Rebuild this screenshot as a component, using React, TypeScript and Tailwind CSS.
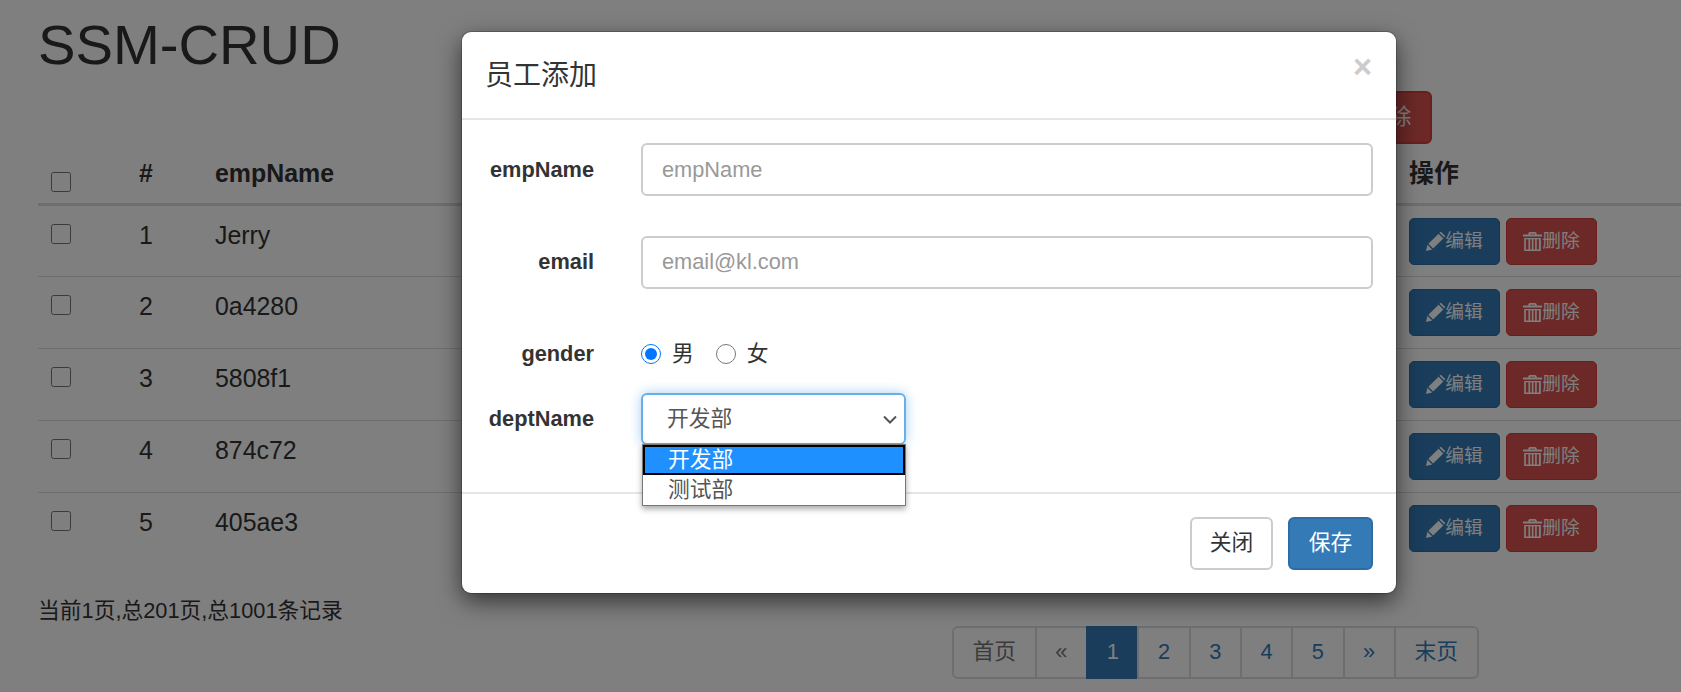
const rows = [
  { id: 1, name: "Jerry" },
  { id: 2, name: "0a4280" },
  { id: 3, name: "5808f1" },
  { id: 4, name: "874c72" },
  { id: 5, name: "405ae3" },
];

function PencilIcon() {
  return (
    <svg viewBox="0 0 16 16" className="w-[19px] h-[19px] shrink-0" fill="currentColor">
      <path d="M0 16l1.2-5.2 4 4z" />
      <path d="M2 9.9L10.6 1.4l4 4L6 13.9z" />
      <path d="M11.7.3c.4-.4 1-.4 1.3 0l2.7 2.7c.4.4.4.9 0 1.3l-.3.3-4-4z" />
    </svg>
  );
}

function TrashIcon() {
  return (
    <svg viewBox="0 0 16 16" className="w-[19px] h-[19px] shrink-0" fill="currentColor">
      <path d="M4.5 2.2V1.4C4.5.6 5.1 0 5.9 0h4.2c.8 0 1.4.6 1.4 1.4v.8H16v1.6H0V2.2zM6 2.2h4v-.8H6z" />
      <path d="M1 5h14v11H1zM2.4 6.2v8.6h2.2V6.2zm3.6 0v8.6h1.4V6.2zm2.8 0v8.6h1.4V6.2zm2.8 0v8.6H13.4V6.2z" fillRule="evenodd" />
    </svg>
  );
}

function ChevronIcon() {
  return (
    <svg viewBox="0 0 14 9" className="w-[14px] h-[9px]" fill="none" stroke="#555" strokeWidth="2">
      <path d="M1 1.5l6 6 6-6" />
    </svg>
  );
}

function PageItem({ label, className }: { label: string; className: string }) {
  return (
    <a className={`flex items-center h-[53px] px-[18.6px] -ml-[2px] first:ml-0 border-2 first:rounded-l-[6px] last:rounded-r-[6px] ${className}`}>
      {label}
    </a>
  );
}

function EmpTable() {
  return (
    <table className="w-[1643px] table-fixed border-collapse -mt-px text-[24.9px] leading-[35.5px] text-[#333]">
      <colgroup>
        <col className="w-[89px]" />
        <col className="w-[76px]" />
        <col />
        <col className="w-[284px]" />
      </colgroup>
      <thead>
        <tr className="border-b-[3px] border-[#ddd]">
          <th className="px-[13px] pt-[13px] pb-[11px] text-left align-bottom">
            <input type="checkbox" className="block w-5 h-5 m-0" readOnly />
          </th>
          <th className="px-[12px] pt-[13px] pb-[11px] text-left">#</th>
          <th className="px-[12px] pt-[13px] pb-[11px] text-left">empName</th>
          <th className="px-[12px] pt-[13px] pb-[11px] text-left">操作</th>
        </tr>
      </thead>
      <tbody>
        {rows.map((row, i) => (
          <tr key={row.id} className={i > 0 ? "border-t border-[#ddd] h-[72px]" : "h-[72px]"}>
            <td className="px-[13px] pt-[18px] align-top">
              <input type="checkbox" className="block w-5 h-5 m-0" readOnly />
            </td>
            <td className="px-[12px] pt-[12px] align-top">{row.id}</td>
            <td className="px-[12px] pt-[12px] align-top">{row.name}</td>
            <td className="px-[12px] pt-[12px] align-top">
              <div className="flex gap-[6px] text-[18.7px] leading-none text-white">
                <button className="flex items-center justify-center w-[91px] h-[47px] bg-[#337ab7] border border-[#2e6da4] rounded-[5px]">
                  <PencilIcon />
                  编辑
                </button>
                <button className="flex items-center justify-center w-[91px] h-[47px] bg-[#d9534f] border border-[#d43f3a] rounded-[5px]">
                  <TrashIcon />
                  删除
                </button>
              </div>
            </td>
          </tr>
        ))}
      </tbody>
    </table>
  );
}

function AddModal() {
  return (
    <div className="absolute left-[462px] top-[32px] w-[934px] bg-white rounded-[9px] shadow-[0_8px_23px_rgba(0,0,0,0.6)] ring-1 ring-black/20">
      <div className="flex justify-between h-[88px] pl-[23px] pr-[24px] border-b-2 border-[#e5e5e5]">
        <h4 className="mt-[28px] text-[28px] leading-[32px] text-[#333]">员工添加</h4>
        <span className="mt-[16px] text-[32.7px] leading-[38px] font-bold text-[#ccc]">×</span>
      </div>
      <div className="relative h-[372px] pt-[23px] text-[21.78px] text-[#333]">
        <div className="flex items-center h-[53px]">
          <label className="w-[132px] pt-px text-right font-bold">empName</label>
          <div className="ml-[47px] flex items-center w-[732px] h-[53px] px-[19px] pt-px border-2 border-[#ccc] rounded-[6px] text-[#999]">
            empName
          </div>
        </div>
        <div className="flex items-center h-[53px] mt-[40px]">
          <label className="w-[132px] text-right font-bold">email</label>
          <div className="ml-[47px] flex items-center w-[732px] h-[53px] px-[19px] border-2 border-[#ccc] rounded-[6px] text-[#999]">
            email@kl.com
          </div>
        </div>
        <div className="flex items-center h-[30px] mt-[50px]">
          <label className="w-[132px] text-right font-bold">gender</label>
          <div className="ml-[47px] flex items-center">
            <input type="radio" name="gender" defaultChecked className="w-5 h-5 m-0 accent-[#0075ff]" />
            <span className="ml-[11px]">男</span>
            <input type="radio" name="gender" className="w-5 h-5 m-0 ml-[22px]" />
            <span className="ml-[11px]">女</span>
          </div>
        </div>
        <div className="flex items-center h-[51px] mt-[24px]">
          <label className="w-[132px] pt-[2px] text-right font-bold">deptName</label>
          <div className="ml-[47px] flex items-center justify-between w-[265px] h-[52px] pl-[24px] pr-[7px] pt-px border-2 border-[#66afe9] rounded-[6px] text-[#555] shadow-[0_0_12px_rgba(102,175,233,0.6)]">
            开发部
            <ChevronIcon />
          </div>
        </div>
        <div className="absolute left-[180px] top-[324px] w-[264px] border border-[#767676] bg-white text-[21.78px] leading-[30px] text-[#555] shadow-[0_3px_6px_rgba(0,0,0,0.35)]">
          <div className="h-[30px] pl-[23px] border-2 border-black bg-[#1e90ff] text-white leading-[26px]">开发部</div>
          <div className="h-[30px] pl-[25px] leading-[29px]">测试部</div>
        </div>
      </div>
      <div className="flex justify-end gap-[15px] h-[101px] pt-[23px] pr-[23px] border-t-2 border-[#e5e5e5] text-[21.78px]">
        <button className="w-[83px] h-[53px] border-2 border-[#ccc] rounded-[6px] bg-white text-[#333]">关闭</button>
        <button className="w-[85px] h-[53px] border-2 border-[#2e6da4] rounded-[6px] bg-[#337ab7] text-white">保存</button>
      </div>
    </div>
  );
}

export default function App() {
  return (
    <div className="relative h-[692px] overflow-hidden bg-white pl-[38px] text-[21.78px] text-[#333] font-['Liberation_Sans','Noto_Sans_CJK_SC',sans-serif]">
      <h1 className="pt-[14px] text-[56.2px] leading-[61px]">SSM-CRUD</h1>
      <div className="flex justify-end gap-[6px] mt-[16px] pr-[249px] w-[1643px]">
        <button className="w-[85px] h-[53px] bg-[#337ab7] border-2 border-[#2e6da4] rounded-[6px] text-white">新增</button>
        <button className="w-[85px] h-[53px] bg-[#d9534f] border-2 border-[#d43f3a] rounded-[6px] text-white">删除</button>
      </div>
      <EmpTable />
      <div className="flex mt-[31px]">
        <div className="w-[914px] leading-[31px]">当前1页,总201页,总1001条记录</div>
        <nav className="flex mt-[31px]">
          <PageItem label="首页" className="border-[#ddd] text-[#777]" />
          <PageItem label="«" className="border-[#ddd] text-[#777]" />
          <PageItem label="1" className="border-[#337ab7] bg-[#337ab7] text-white" />
          <PageItem label="2" className="border-[#ddd] text-[#337ab7]" />
          <PageItem label="3" className="border-[#ddd] text-[#337ab7]" />
          <PageItem label="4" className="border-[#ddd] text-[#337ab7]" />
          <PageItem label="5" className="border-[#ddd] text-[#337ab7]" />
          <PageItem label="»" className="border-[#ddd] text-[#337ab7]" />
          <PageItem label="末页" className="border-[#ddd] text-[#337ab7]" />
        </nav>
      </div>
      {/* backdrop */}
      <div className="absolute inset-0 bg-[rgba(0,0,0,0.5)]" />
      <AddModal />
    </div>
  );
}
